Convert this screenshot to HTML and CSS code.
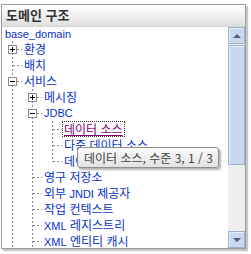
FILE: index.html
```html
<!DOCTYPE html>
<html lang="ko">
<head>
<meta charset="utf-8">
<link rel="stylesheet" href="styles.css">
</head>
<body>
<div class="panel">
  <div class="header">도메인 구조</div>
  <div class="body">
    <div class="tree">
      <div class="row"><span class="label root lat">base_domain</span></div>
      <div class="row"><span class="cell tee"><span class="box plus"></span></span><span class="label">환경</span></div>
      <div class="row"><span class="cell tee"></span><span class="label">배치</span></div>
      <div class="row"><span class="cell tee"><span class="box"></span></span><span class="label">서비스</span></div>
      <div class="row"><span class="cell v"></span><span class="cell tee"><span class="box plus"></span></span><span class="label">메시징</span></div>
      <div class="row"><span class="cell v"></span><span class="cell tee"><span class="box"></span></span><span class="label lat">JDBC</span></div>
      <div class="row"><span class="cell v"></span><span class="cell v"></span><span class="cell tee"></span><span class="label sel">데이터 소스</span></div>
      <div class="row"><span class="cell v"></span><span class="cell v"></span><span class="cell tee"></span><span class="label">다중 데이터 소스</span></div>
      <div class="row"><span class="cell v"></span><span class="cell v"></span><span class="cell elbow"></span><span class="label">데이터 소스 팩토리</span></div>
      <div class="row"><span class="cell v"></span><span class="cell tee"></span><span class="label">영구 저장소</span></div>
      <div class="row"><span class="cell v"></span><span class="cell tee"></span><span class="label">외부 <span class="lat">JNDI</span> 제공자</span></div>
      <div class="row"><span class="cell v"></span><span class="cell tee"></span><span class="label">작업 컨텍스트</span></div>
      <div class="row"><span class="cell v"></span><span class="cell tee"></span><span class="label"><span class="lat">XML</span> 레지스트리</span></div>
      <div class="row"><span class="cell v"></span><span class="cell tee"></span><span class="label"><span class="lat">XML</span> 엔티티 캐시</span></div>
    </div>
    <div class="scrollbar">
      <div class="sbtn"><span class="arrow up"></span></div>
      <div class="thumb"></div>
      <div class="track"></div>
      <div class="sbtn"><span class="arrow down"></span></div>
    </div>
    <div class="tooltip">데이터 소스, 수준 3, 1 / 3</div>
  </div>
</div>
</body>
</html>
```

FILE: styles.css
```css
html, body {
  margin: 0;
  padding: 0;
  background: #ffffff;
}

body {
  font-family: "Noto Sans CJK KR", sans-serif;
  font-size: 12px;
  width: 251px;
  height: 254px;
  overflow: hidden;
}

.panel {
  margin: 4px 0 0 1px;
  width: 243px;
  height: 243px;
  border: 1px solid #9c9c9c;
  box-shadow: 2px 2px 1px rgba(0, 0, 0, 0.22);
  display: flex;
  flex-direction: column;
  background: #ffffff;
}

.header {
  height: 22px;
  flex: none;
  border-bottom: 1px solid #d4d4d4;
  background: linear-gradient(to bottom, #ffffff 0%, #f2f2f2 45%, #dedede 100%);
  color: #333333;
  font-weight: bold;
  font-size: 13px;
  line-height: 20px;
  padding-left: 4px;
  box-sizing: border-box;
}

.body {
  flex: 1;
  display: flex;
  position: relative;
  overflow: hidden;
}

.tree {
  flex: 1;
  overflow: hidden;
}

.row {
  display: flex;
  height: 16px;
  align-items: flex-start;
  white-space: nowrap;
}

.row:first-child {
  height: 14px;
}

.label {
  color: #0632c9;
  line-height: 16px;
  height: 16px;
  padding-left: 2px;
}

.label.root {
  padding-left: 3px;
  line-height: 14px;
  height: 14px;
}

.lat {
  font-family: "Liberation Sans", sans-serif;
  font-size: 11px;
}

.label.sel {
  color: #800080;
  text-decoration: underline;
  outline: 1px dotted #333333;
  outline-offset: -1px;
  padding-right: 2px;
}

.cell {
  width: 20px;
  height: 16px;
  flex: none;
  display: flex;
  align-items: flex-start;
}

.cell.v {
  background: repeating-linear-gradient(to bottom, #8a8a8a 0 2px, transparent 2px 4px) 10px 0 / 1px 16px no-repeat;
}

.cell.tee {
  background:
    repeating-linear-gradient(to bottom, #8a8a8a 0 2px, transparent 2px 4px) 10px 0 / 1px 16px no-repeat,
    repeating-linear-gradient(to right, #8a8a8a 0 2px, transparent 2px 4px) 11px 8px / 10px 1px no-repeat;
}

.cell.elbow {
  background:
    repeating-linear-gradient(to bottom, #8a8a8a 0 2px, transparent 2px 4px) 10px 0 / 1px 9px no-repeat,
    repeating-linear-gradient(to right, #8a8a8a 0 2px, transparent 2px 4px) 11px 8px / 10px 1px no-repeat;
}

.box {
  width: 9px;
  height: 9px;
  box-sizing: border-box;
  margin: 4px 0 0 6px;
  border: 1px solid #8a8a8a;
  background:
    linear-gradient(#000000, #000000) center / 5px 1px no-repeat,
    #ffffff;
}

.box.plus {
  background:
    linear-gradient(#000000, #000000) center / 5px 1px no-repeat,
    linear-gradient(#000000, #000000) center / 1px 5px no-repeat,
    #ffffff;
}

.scrollbar {
  width: 17px;
  flex: none;
  display: flex;
  flex-direction: column;
  background: #efefef;
}

.sbtn {
  height: 17px;
  flex: none;
  box-sizing: border-box;
  border: 1px solid #9fb2cc;
  background: #c8d8ee;
  box-shadow: inset 1px 1px 0 #e4ecf7;
  display: flex;
  align-items: center;
  justify-content: center;
}

.arrow {
  width: 0;
  height: 0;
  border-left: 4px solid transparent;
  border-right: 4px solid transparent;
}

.arrow.up {
  border-bottom: 4px solid #4c5f82;
}

.arrow.down {
  border-top: 4px solid #4c5f82;
}

.thumb {
  height: 120px;
  flex: none;
  margin-top: 1px;
  box-sizing: border-box;
  border: 1px solid #9fb2cc;
  background: #c8d8ee;
  box-shadow: inset 1px 1px 0 #e4ecf7;
}

.track {
  flex: 1;
}

.tooltip {
  position: absolute;
  left: 75px;
  top: 120px;
  height: 21px;
  box-sizing: border-box;
  padding: 0 5px 0 6px;
  border: 1px solid #8e8e8e;
  border-radius: 3px;
  background: linear-gradient(to bottom, #fbfbfb 0%, #ececec 60%, #e2e2e2 100%);
  box-shadow: 2px 2px 2px rgba(0, 0, 0, 0.3);
  color: #444444;
  font-size: 12px;
  line-height: 19px;
  white-space: nowrap;
}
```
